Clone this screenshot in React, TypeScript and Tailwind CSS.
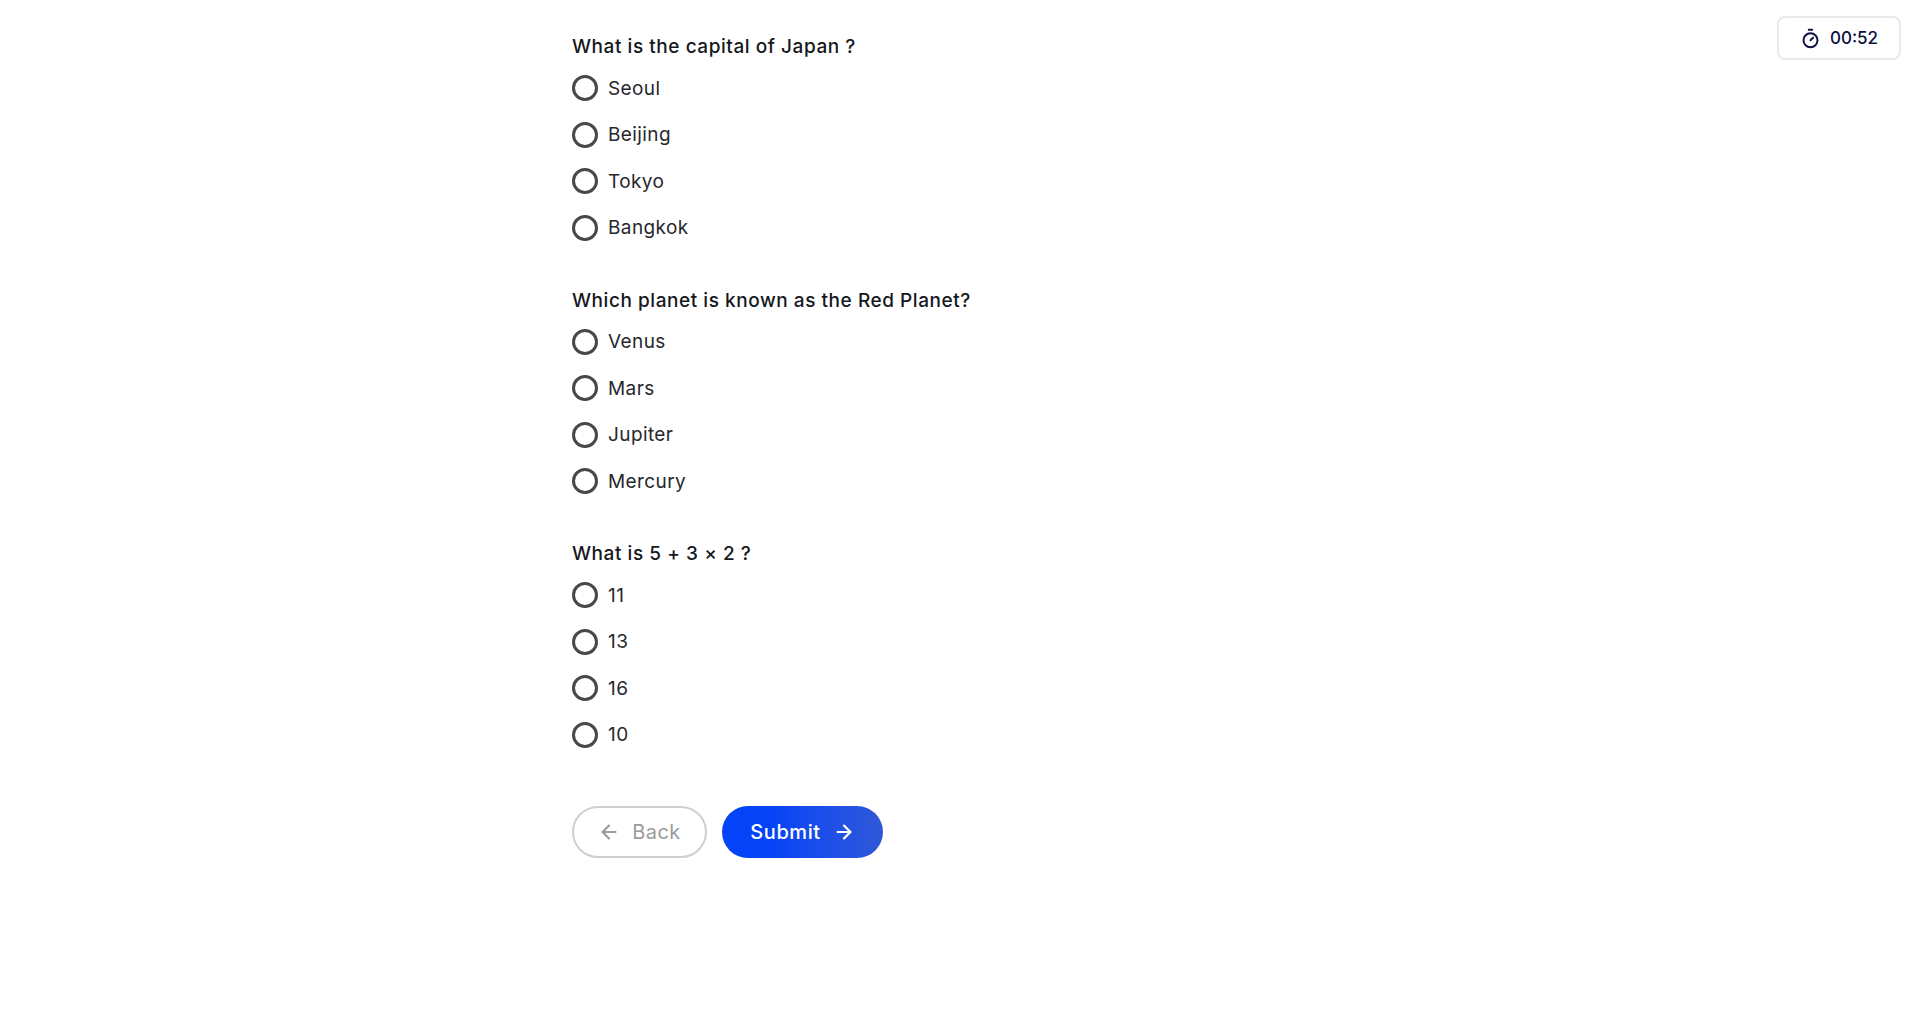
import { ArrowLeft, ArrowRight, Timer } from 'lucide-react';

const questions = [
  { title: 'What is the capital of Japan ?', options: ['Seoul', 'Beijing', 'Tokyo', 'Bangkok'] },
  { title: 'Which planet is known as the Red Planet?', options: ['Venus', 'Mars', 'Jupiter', 'Mercury'] },
  { title: 'What is 5 + 3 × 2 ?', options: ['11', '13', '16', '10'] },
];

export default function App() {
  return (
    <div className="relative min-h-[1017px] bg-white font-['Inter','Liberation_Sans',sans-serif]">
      {/* timer */}
      <div className="absolute right-[19px] top-[16px] flex h-[44px] w-[124px] items-center justify-center gap-[9px] rounded-[8px] border-2 border-[#e8e8ee] bg-white text-[#0c1140]">
        <Timer className="h-[21px] w-[21px]" strokeWidth={2.2} />
        <span className="pt-[2px] text-[17px] font-medium">00:52</span>
      </div>

      <div className="ml-[572px] flex w-[800px] flex-col pt-[33px]">
        {questions.map((q) => (
          <div key={q.title} className="mb-[46px] flex flex-col">
            <div className="h-[28px] text-[19px] font-medium leading-[28px] tracking-[0.55px] text-[#16181d]">{q.title}</div>
            <div className="mt-[14px] flex flex-col gap-[20.5px]">
              {q.options.map((o) => (
                <label key={o} className="flex h-[26px] items-center gap-[10px]">
                  <span className="h-[26px] w-[26px] rounded-full border-[3px] border-[#48484c]" />
                  <span className="pt-[2px] text-[19px] tracking-[0.4px] text-[#26282c]">{o}</span>
                </label>
              ))}
            </div>
          </div>
        ))}

        <div className="mt-[12px] flex gap-[15px]">
          <button className="flex h-[52px] w-[135px] items-center justify-center gap-[12px] rounded-full border-2 border-[#cfcfcf] bg-white text-[20px] tracking-[0.4px] text-[#9b9b9b]">
            <ArrowLeft className="h-[22px] w-[22px]" strokeWidth={2.4} />
            Back
          </button>
          <button className="flex h-[52px] w-[161px] items-center justify-center gap-[12px] rounded-full bg-gradient-to-r from-[#0443f7] from-30% to-[#2f57d8] text-[20px] font-medium tracking-[0.6px] text-white">
            Submit
            <ArrowRight className="h-[22px] w-[22px]" strokeWidth={2.4} />
          </button>
        </div>
      </div>
    </div>
  );
}
